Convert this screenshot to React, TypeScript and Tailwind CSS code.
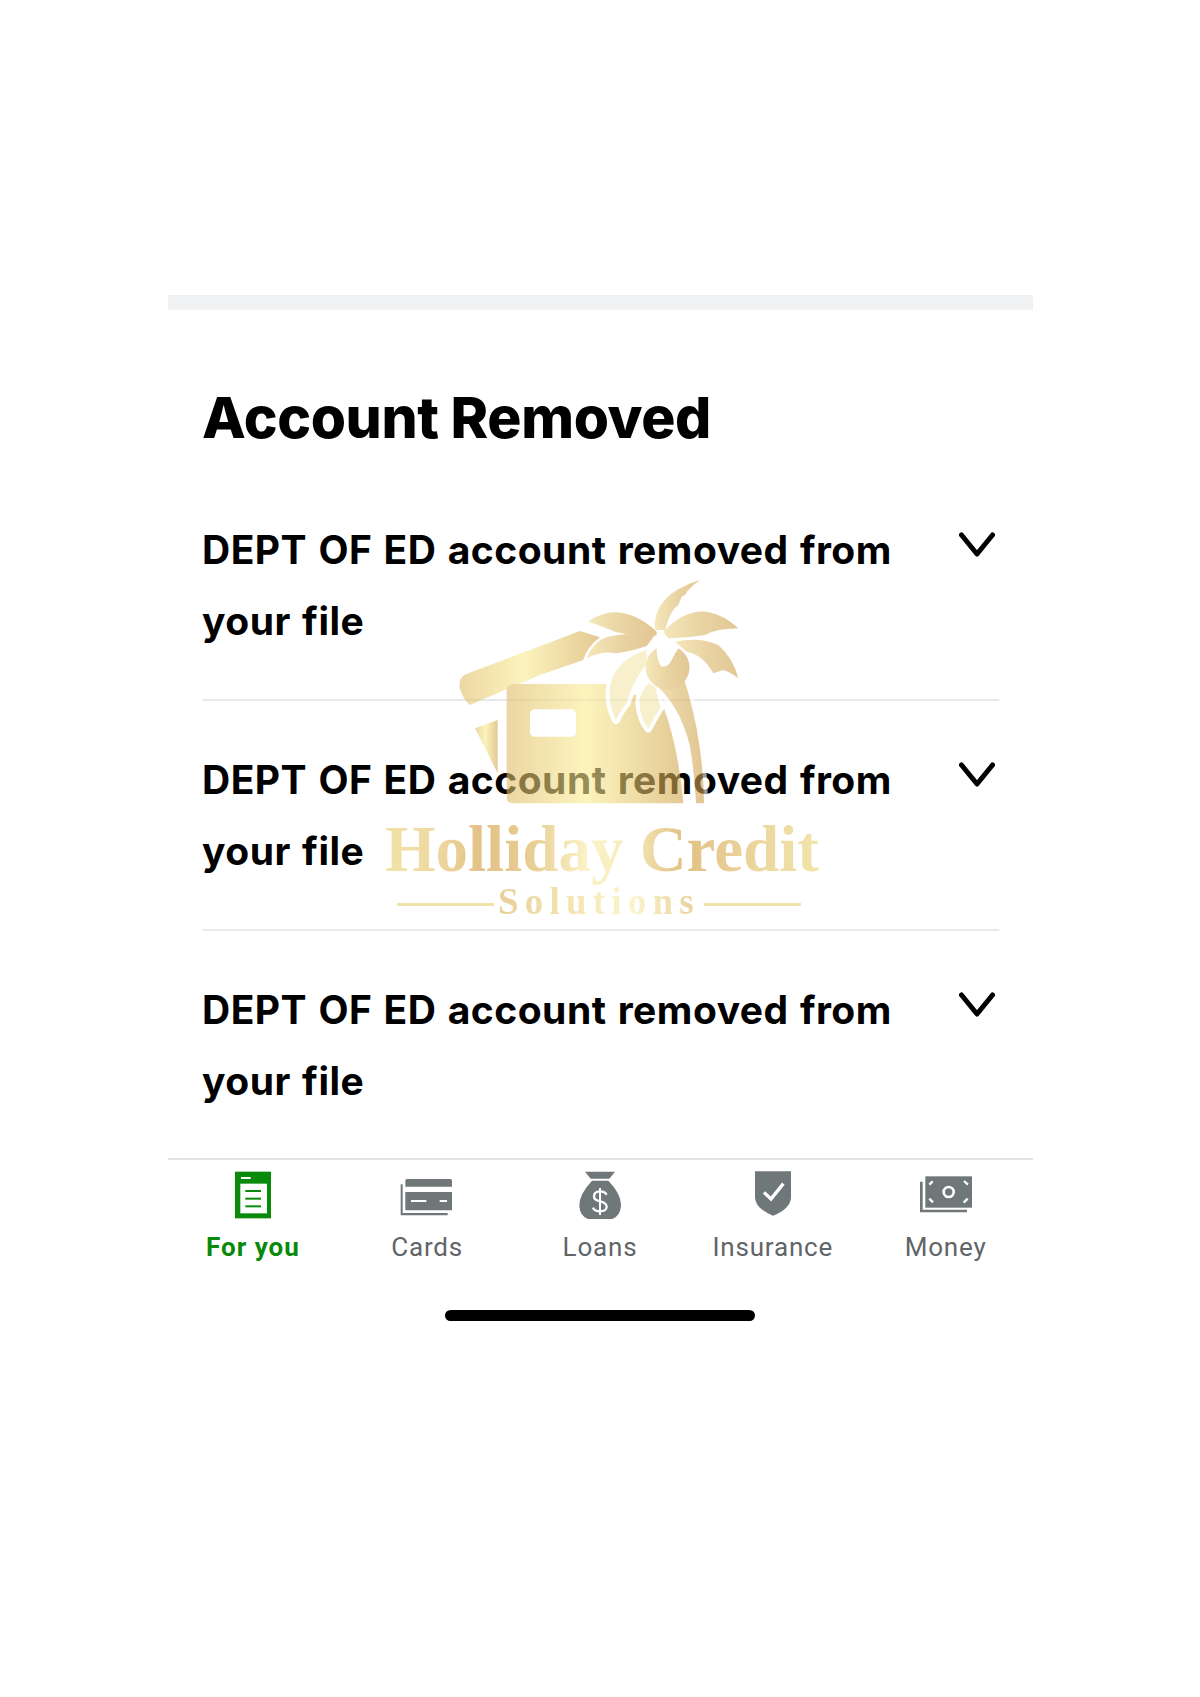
import React from "react";

const GRAY = "#6f7779";

function Chevron() {
  return (
    <svg width="36" height="26" viewBox="0 0 36 26" className="shrink-0" aria-hidden="true">
      <path d="M2.5 3 L18 22 L33.5 3" fill="none" stroke="#000" strokeWidth="5" strokeLinecap="round" strokeLinejoin="round" />
    </svg>
  );
}

function Row({ last }: { last?: boolean }) {
  return (
    <div className={`flex justify-between ${last ? "h-[227px]" : "h-[230px] border-b-2 border-[#e7e9ea]"}`}>
      <p className="w-[720px] pt-[43px] text-[39px] leading-[71px] font-bold text-black tracking-[0.5px] [word-spacing:1.5px] font-['Inter',sans-serif]">
        DEPT OF ED account removed from your file
      </p>
      <div className="pt-[61px] pr-[4px]">
        <Chevron />
      </div>
    </div>
  );
}

function ForYouIcon() {
  return (
    <svg width="60" height="48" viewBox="186 95 180 144" aria-hidden="true">
      <rect x="222" y="97" width="108" height="140" fill="#0a8a0a" />
      <rect x="238" y="133" width="80" height="89" fill="#fff" />
      <rect x="240" y="113" width="29" height="6" fill="#fff" />
      <rect x="253" y="152" width="47" height="6" fill="#0a8a0a" />
      <rect x="253" y="175" width="47" height="6" fill="#0a8a0a" />
      <rect x="253" y="198" width="47" height="6" fill="#0a8a0a" />
    </svg>
  );
}

function CardsIcon() {
  return (
    <svg width="60" height="48" viewBox="708 95 180 144" aria-hidden="true">
      <path d="M738 119 H868 Q873 119 873 124 V142 H733 V124 Q733 119 738 119Z" fill={GRAY} />
      <path d="M733 158 H873 V213 H733Z" fill={GRAY} />
      <rect x="750" y="182" width="46" height="6" fill="#fff" />
      <rect x="836" y="182" width="22" height="6" fill="#fff" />
      <path d="M719 135 H725 V221 H860 V228 H719Z" fill={GRAY} />
    </svg>
  );
}

function LoansIcon() {
  return (
    <svg width="60" height="48" viewBox="1227 95 180 144" aria-hidden="true">
      <path d="M1272 97 H1362 L1345 118 H1289Z" fill={GRAY} />
      <path d="M1293 124 H1342 Q1382 165 1380 200 Q1376 243 1330 243 H1305 Q1258 243 1255 200 Q1254 165 1293 124Z" fill={GRAY} />
      <path d="M1337 166 Q1332 156 1317 156 Q1299 157 1299 171 Q1299 183 1317 186 Q1337 190 1337 203 Q1336 216 1317 216 Q1300 216 1296 205" fill="none" stroke="#fff" strokeWidth="7" />
      <path d="M1317 146 V227" fill="none" stroke="#fff" strokeWidth="6" />
    </svg>
  );
}

function InsuranceIcon() {
  return (
    <svg width="60" height="48" viewBox="426 95 180 144" aria-hidden="true">
      <path d="M462 96 H570 V175 Q568 208 516 229 Q464 208 462 175Z" fill={GRAY} />
      <path d="M489 159 L510 179 L547 133" fill="none" stroke="#fff" strokeWidth="10" />
    </svg>
  );
}

function MoneyIcon() {
  return (
    <svg width="60" height="48" viewBox="947 95 180 144" aria-hidden="true">
      <rect x="975" y="111" width="140" height="94" fill={GRAY} />
      <path d="M959 127 H967 V211 H1100 V219 H959Z" fill={GRAY} />
      <circle cx="1045" cy="158" r="15" fill="none" stroke="#fff" strokeWidth="8" />
      <path d="M987 136 L997 126 M1103 136 L1091 125 M987 178 L998 189 M1102 178 L1090 190" fill="none" stroke="#fff" strokeWidth="7" />
    </svg>
  );
}

const tabs = [
  { label: "For you", icon: <ForYouIcon />, active: true },
  { label: "Cards", icon: <CardsIcon /> },
  { label: "Loans", icon: <LoansIcon /> },
  { label: "Insurance", icon: <InsuranceIcon /> },
  { label: "Money", icon: <MoneyIcon /> },
];

function Watermark() {
  return (
    <div className="absolute left-[370px] top-[560px] w-[460px] h-[370px] pointer-events-none">
      <svg width="460" height="370" viewBox="0 0 1380 1110" className="absolute left-0 top-0 opacity-60" aria-hidden="true">
        <defs>
          <linearGradient id="goldA" x1="0" y1="0" x2="1" y2="0">
            <stop offset="0" stopColor="#dfbd68" />
            <stop offset="0.45" stopColor="#fbec92" />
            <stop offset="1" stopColor="#d2a64e" />
          </linearGradient>
          <linearGradient id="goldB" x1="0" y1="0" x2="1" y2="0">
            <stop offset="0" stopColor="#eed98c" />
            <stop offset="0.5" stopColor="#dcb768" />
            <stop offset="1" stopColor="#cfa24e" />
          </linearGradient>
        </defs>
        <path d="M270 362 Q275 347 295 340 L630 213 L690 232 Q650 262 640 300 L510 345 L300 435 Q280 420 268 380Z" fill="url(#goldA)" />
        <path d="M315 505 L383 480 V640Z" fill="url(#goldA)" />
        <path d="M430 372 H720 L880 440 Q925 560 940 730 H430 Q410 730 410 710 V392 Q410 372 430 372Z" fill="url(#goldA)" />
        <rect x="480" y="448" width="138" height="82" rx="14" fill="#fff" />
        <g stroke="#fff" strokeWidth="24" strokeLinejoin="round" fill="#fff">
          <path d="M830 270 Q760 290 728 350 Q705 415 738 480 Q755 445 770 430 Q785 370 830 310Z" />
          <path d="M838 370 Q808 395 808 430 Q812 478 835 505 Q850 475 872 440 Q860 410 858 385Z" />
          <path d="M840 360 Q930 430 960 560 Q975 650 978 730 H1002 Q1000 560 955 400 L940 350Z" />
          <path d="M860 265 A66 66 0 1 0 925 265 L925 300 L860 300Z" />
        </g>
        <g fill="url(#goldB)">
          <path d="M855 210 Q845 105 990 60 Q955 85 945 105 L935 110 L925 135 Q905 150 895 180 L885 210Z" />
          <path d="M860 215 Q790 150 715 158 Q680 165 655 185 Q700 200 735 215 Q800 232 860 226Z" />
          <path d="M880 215 Q940 150 1010 155 Q1065 165 1105 205 Q1040 205 1005 225 Q950 235 895 235Z" />
          <path d="M855 225 Q740 215 690 240 Q660 265 650 295 Q700 270 735 280 Q780 275 830 258Z" />
          <path d="M915 245 Q990 230 1045 255 Q1090 295 1105 355 Q1080 335 1060 330 L1030 340 Q1000 285 950 275Z" />
          <path d="M830 270 Q760 290 728 350 Q705 415 738 480 Q755 445 770 430 Q785 370 830 310Z" fill="#f4e7ac" />
          <path d="M838 370 Q808 395 808 430 Q812 478 835 505 Q850 475 872 440 Q860 410 858 385Z" fill="#f4e7ac" />
          <path d="M840 360 Q930 430 960 560 Q975 650 978 730 H1002 Q1000 560 955 400 L940 350Z" />
          <path d="M860 265 A66 66 0 1 0 925 265 Q912 285 905 300 Q895 322 875 320 Q860 305 860 265Z" />
        </g>
      </svg>
      <div className="absolute left-[15px] top-[252px] w-[440px] whitespace-nowrap text-[65px] leading-[75px] font-bold bg-[linear-gradient(90deg,#f3e3a8_0%,#eed8a0_12%,#e3c186_22%,#e8cf95_34%,#fbf3c8_46%,#f7ecba_55%,#e2c084_68%,#ecd79f_85%,#f3e5a9_100%)] bg-clip-text text-transparent font-['Liberation_Serif',serif]">
        Holliday Credit
      </div>
      <div className="absolute left-[27px] top-[320px] w-[404px] flex items-center justify-between">
        <span className="mt-[4px] block h-[3px] w-[97px] bg-[#f1e2a9]" />
        <span className="text-[37px] leading-[44px] font-bold tracking-[6.2px] bg-[linear-gradient(90deg,#e9cf9a_0%,#f3e4ae_35%,#fbf5cd_65%,#e8cf98_100%)] bg-clip-text text-transparent font-['Liberation_Serif',serif]">
          Solutions
        </span>
        <span className="mt-[4px] block h-[3px] w-[97px] bg-[#f1e2a9]" />
      </div>
    </div>
  );
}

export default function App() {
  return (
    <div className="relative h-[1697px] w-[1200px] bg-white pt-[295px] pl-[168px] font-['Roboto','Liberation_Sans',sans-serif] overflow-hidden">
      <div className="w-[865px]">
        <div className="h-[15px] bg-[#eff1f2]" />
        <div className="px-[34px]">
          <h1 className="pt-[70px] pb-[15px] text-[57px] leading-[76px] font-extrabold text-black tracking-[-0.4px] font-['Inter',sans-serif]">Account Removed</h1>
          <Row />
          <Row />
          <Row last />
        </div>
        <nav className="grid grid-cols-5 border-t-2 border-[#e2e4e5] pt-[11px] pr-[1px]">
          {tabs.map((t) => (
            <div key={t.label} className={`flex flex-col items-center ${t.active ? "pr-[3px]" : ""}`}>
              {t.icon}
              <span className={`mt-[8px] text-[26px] leading-[40px] ${t.active ? "font-bold tracking-[1px] text-[#0a8a0a]" : "tracking-[0.8px] text-[#5f6568]"}`}>
                {t.label}
              </span>
            </div>
          ))}
        </nav>
        <div className="ml-[277px] mt-[43px] h-[11px] w-[310px] rounded-full bg-black" />
      </div>
      <Watermark />
    </div>
  );
}
